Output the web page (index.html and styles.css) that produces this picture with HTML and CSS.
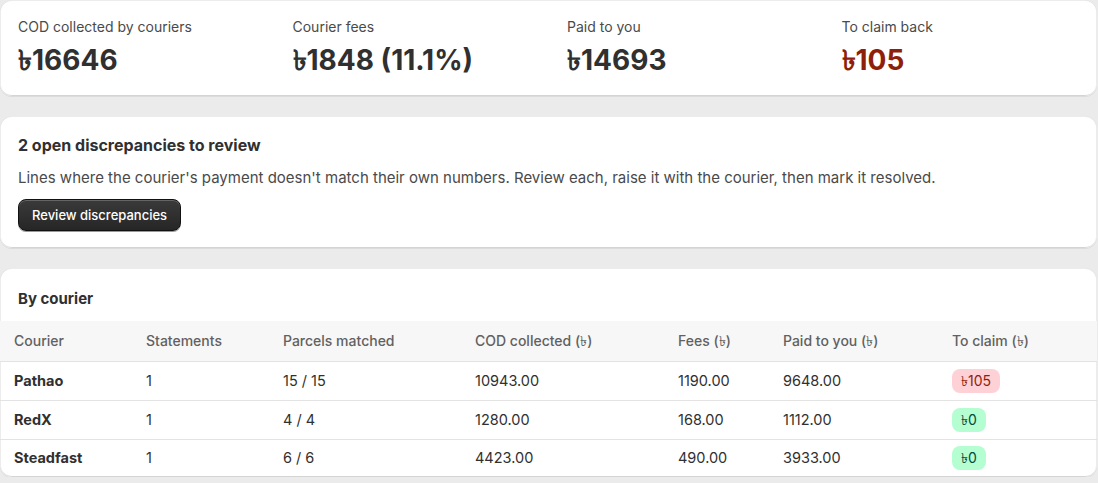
FILE: index.html
```html
<!DOCTYPE html>
<html lang="en">
<head>
<meta charset="utf-8">
<title>Courier reconciliation</title>
<link rel="stylesheet" href="styles.css">
</head>
<body>
<main class="page">
  <section class="card stats">
    <div class="stat">
      <div class="stat-label">COD collected by couriers</div>
      <div class="stat-value">৳16646</div>
    </div>
    <div class="stat">
      <div class="stat-label">Courier fees</div>
      <div class="stat-value">৳1848 (11.1%)</div>
    </div>
    <div class="stat">
      <div class="stat-label">Paid to you</div>
      <div class="stat-value">৳14693</div>
    </div>
    <div class="stat">
      <div class="stat-label">To claim back</div>
      <div class="stat-value critical">৳105</div>
    </div>
  </section>

  <section class="card notice">
    <h2 class="card-title notice-title">2 open discrepancies to review</h2>
    <p class="notice-text">Lines where the courier's payment doesn't match their own numbers. Review each, raise it with the courier, then mark it resolved.</p>
    <div><button class="btn-primary" type="button">Review discrepancies</button></div>
  </section>

  <section class="card couriers">
    <h2 class="card-title couriers-title">By courier</h2>
    <table class="table">
      <colgroup>
        <col class="c1"><col class="c2"><col class="c3"><col class="c4"><col class="c5"><col class="c6"><col class="c7">
      </colgroup>
      <thead>
        <tr>
          <th>Courier</th><th>Statements</th><th>Parcels matched</th><th>COD collected (৳)</th><th>Fees (৳)</th><th>Paid to you (৳)</th><th>To claim (৳)</th>
        </tr>
      </thead>
      <tbody>
        <tr>
          <td class="name">Pathao</td><td>1</td><td>15 / 15</td><td>10943.00</td><td>1190.00</td><td>9648.00</td><td><span class="badge badge-critical">৳105</span></td>
        </tr>
        <tr>
          <td class="name">RedX</td><td>1</td><td>4 / 4</td><td>1280.00</td><td>168.00</td><td>1112.00</td><td><span class="badge badge-success">৳0</span></td>
        </tr>
        <tr>
          <td class="name">Steadfast</td><td>1</td><td>6 / 6</td><td>4423.00</td><td>490.00</td><td>3933.00</td><td><span class="badge badge-success">৳0</span></td>
        </tr>
      </tbody>
    </table>
  </section>
</main>
</body>
</html>
```

FILE: styles.css
```css
* { box-sizing: border-box; }
html, body {
  margin: 0;
  padding: 0;
  background: #ebebeb;
}
body {
  font-family: Inter, "Noto Sans", "DejaVu Sans", sans-serif;
  color: #303030;
  font-size: 14px;
  line-height: 20px;
}
.page {
  display: flex;
  flex-direction: column;
  gap: 20px;
  width: 1097px;
}
.card {
  background: #ffffff;
  border-radius: 12px;
  box-shadow: 0 1px 0 0 rgba(26,26,26,0.07), 0 1px 0 0 rgba(208,208,208,0.4) inset, 1px 0 0 0 #ececec inset, -1px 0 0 0 #ececec inset, 0 -1px 0 0 #d4d4d4 inset;
}
.stats {
  display: grid;
  grid-template-columns: repeat(4, 1fr);
  column-gap: 37px;
  padding: 17px 18px 18px;
}
.stat {
  display: flex;
  flex-direction: column;
  gap: 5px;
}
.stat-label {
  font-size: 14px;
  line-height: 20px;
  color: #4a4a4a;
}
.stat-value {
  font-size: 28px;
  line-height: 36px;
  font-weight: 700;
  color: #303030;
}
.stat-value.critical { color: #8e1f0b; }

.notice {
  padding: 19px 18px 17px;
  display: flex;
  flex-direction: column;
}
.card-title {
  margin: 0;
  font-size: 15px;
  line-height: 20px;
  font-weight: 650;
  color: #303030;
}
.notice-title { font-size: 16px; }
.notice-text {
  margin: 13px 0 0;
  font-size: 15px;
  line-height: 20px;
  color: #4a4a4a;
}
.btn-primary {
  margin-top: 11px;
  font-family: inherit;
  font-size: 13px;
  font-weight: 550;
  line-height: 20px;
  color: #ffffff;
  background: linear-gradient(#3a3a3a, #262626);
  border: 1px solid #111;
  border-radius: 8px;
  padding: 5px 13px;
  height: 32px;
  box-shadow: inset 0 1px 0 rgba(255,255,255,0.22), 0 1px 0 rgba(0,0,0,0.4);
}

.couriers {
  padding-top: 21px;
  overflow: hidden;
}
.couriers-title { padding: 0 18px 12px; }
.table {
  width: 100%;
  border-collapse: collapse;
  table-layout: fixed;
}
.c1 { width: 132px; }
.c2 { width: 137px; }
.c3 { width: 192px; }
.c4 { width: 203px; }
.c5 { width: 105px; }
.c6 { width: 169px; }
.table th {
  background: #f7f7f7;
  text-align: left;
  font-weight: 450;
  color: #616161;
  font-size: 14px;
  height: 40px;
  padding: 0 14px;
  border-bottom: 1px solid #e3e3e3;
}
.table td {
  height: 39px;
  padding: 0 14px;
  font-size: 14.5px;
  color: #303030;
  border-bottom: 1px solid #e3e3e3;
}
.table tbody tr:last-child td { border-bottom: none; height: 38px; }
.table td.name { font-weight: 650; }
.badge {
  display: inline-block;
  font-size: 14px;
  line-height: 20px;
  padding: 2px 9px;
  border-radius: 8px;
}
.badge-critical { background: #fed1d7; color: #8e1f0b; }
.badge-success { background: #b4fed2; color: #014b40; }
```
